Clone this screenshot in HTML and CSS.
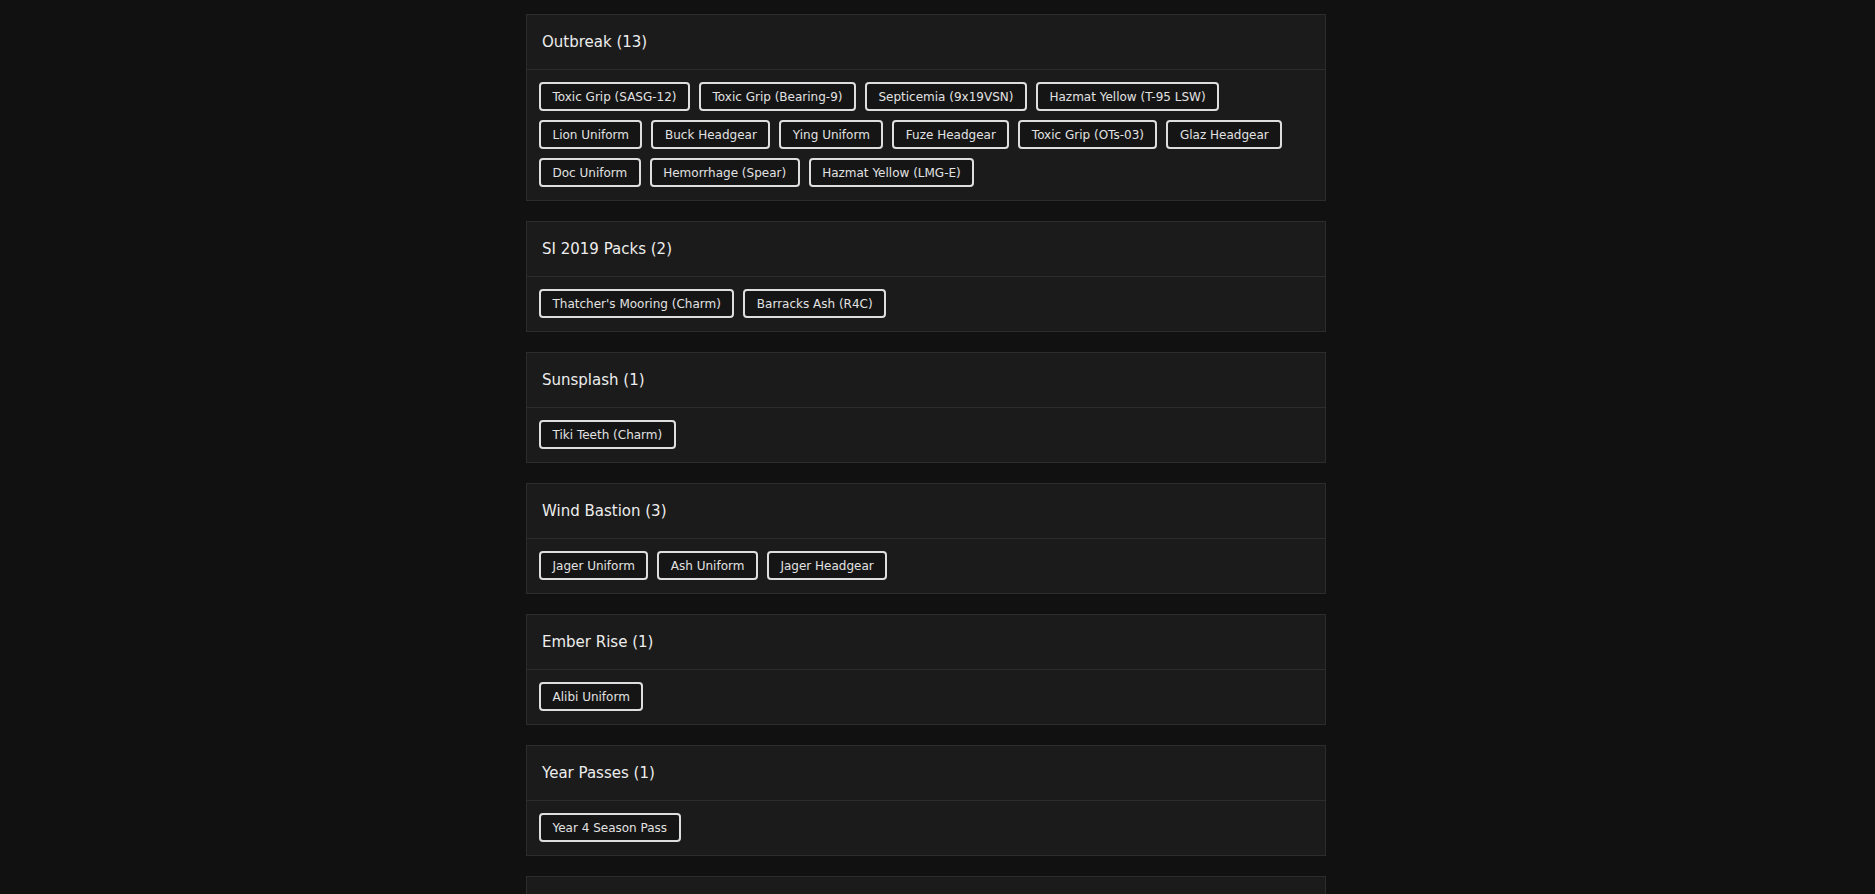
FILE: index.html
```html
<!DOCTYPE html>
<html>
<head>
<meta charset="utf-8">
<link rel="stylesheet" href="styles.css">
</head>
<body>
<main class="list">
  <section class="card">
    <header class="card-head">Outbreak (13)</header>
    <div class="card-body">
      <span class="tag">Toxic Grip (SASG-12)</span>
      <span class="tag">Toxic Grip (Bearing-9)</span>
      <span class="tag">Septicemia (9x19VSN)</span>
      <span class="tag">Hazmat Yellow (T-95 LSW)</span>
      <span class="tag">Lion Uniform</span>
      <span class="tag">Buck Headgear</span>
      <span class="tag">Ying Uniform</span>
      <span class="tag">Fuze Headgear</span>
      <span class="tag">Toxic Grip (OTs-03)</span>
      <span class="tag">Glaz Headgear</span>
      <span class="tag">Doc Uniform</span>
      <span class="tag">Hemorrhage (Spear)</span>
      <span class="tag">Hazmat Yellow (LMG-E)</span>
    </div>
  </section>
  <section class="card">
    <header class="card-head">SI 2019 Packs (2)</header>
    <div class="card-body">
      <span class="tag">Thatcher's Mooring (Charm)</span>
      <span class="tag">Barracks Ash (R4C)</span>
    </div>
  </section>
  <section class="card">
    <header class="card-head">Sunsplash (1)</header>
    <div class="card-body">
      <span class="tag">Tiki Teeth (Charm)</span>
    </div>
  </section>
  <section class="card">
    <header class="card-head">Wind Bastion (3)</header>
    <div class="card-body">
      <span class="tag">Jager Uniform</span>
      <span class="tag">Ash Uniform</span>
      <span class="tag">Jager Headgear</span>
    </div>
  </section>
  <section class="card">
    <header class="card-head">Ember Rise (1)</header>
    <div class="card-body">
      <span class="tag">Alibi Uniform</span>
    </div>
  </section>
  <section class="card">
    <header class="card-head">Year Passes (1)</header>
    <div class="card-body">
      <span class="tag">Year 4 Season Pass</span>
    </div>
  </section>
  <section class="card">
    <header class="card-head"></header>
    <div class="card-body"></div>
  </section>
</main>
</body>
</html>
```
FILE: styles.css
```css
html, body {
  margin: 0;
  padding: 0;
  background: #111111;
  color: #e6e6e6;
  font-family: "DejaVu Sans", "Open Sans", sans-serif;
  overflow: hidden;
  height: 894px;
}
.list {
  width: 800px;
  margin-left: 526px;
  padding-top: 14px;
  display: flex;
  flex-direction: column;
  gap: 20px;
}
.card {
  background: #1b1b1b;
  border: 1px solid #2c2c2c;
}
.card-head {
  box-sizing: border-box;
  height: 55px;
  display: flex;
  align-items: center;
  padding: 0 15px;
  font-size: 15px;
  color: #ededed;
  border-bottom: 1px solid #2c2c2c;
}
.card-body {
  min-height: 29px;
  padding: 12px 12px 13px;
  display: flex;
  flex-wrap: wrap;
  gap: 9px;
}
.tag {
  box-sizing: border-box;
  height: 29px;
  display: inline-flex;
  align-items: center;
  padding: 0 11.5px;
  border: 2px solid #dedede;
  border-radius: 4px;
  background: #151515;
  font-size: 12px;
  color: #e2e2e2;
  white-space: nowrap;
}
```
